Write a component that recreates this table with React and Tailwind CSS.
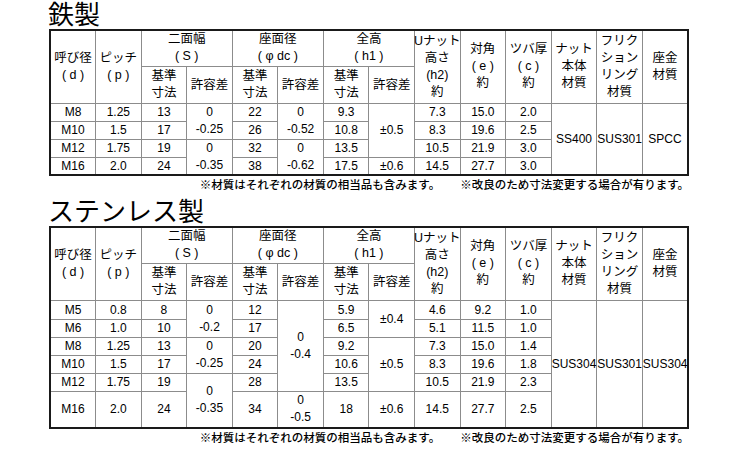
const font = { fontFamily: '"Liberation Sans", "Noto Sans CJK JP", sans-serif' };

const Cell = ({ children, rs, cs, className = '' }) => (
  <td
    rowSpan={rs}
    colSpan={cs}
    className={`border border-[#8c8c8c] p-0 text-center align-middle whitespace-nowrap ${className}`}
  >
    {children}
  </td>
);

const Lines = ({ items }) => (
  <div className="flex flex-col items-center leading-[17px]">
    {items.map((t, i) => (
      <span key={i}>{t}</span>
    ))}
  </div>
);

const Header = () => (
  <thead className="text-[12.5px]">
    <tr className="h-[36px]">
      <Cell rs={2}><Lines items={['呼び径', '( d )']} /></Cell>
      <Cell rs={2}><Lines items={['ピッチ', '( p )']} /></Cell>
      <Cell cs={2}><Lines items={['二面幅', '( S )']} /></Cell>
      <Cell cs={2}><Lines items={['座面径', '( φ dc )']} /></Cell>
      <Cell cs={2}><Lines items={['全高', '( h1 )']} /></Cell>
      <Cell rs={2}><Lines items={['Uナット', '高さ', '(h2)', '約']} /></Cell>
      <Cell rs={2}><Lines items={['対角', '( e )', '約']} /></Cell>
      <Cell rs={2}><Lines items={['ツバ厚', '( c )', '約']} /></Cell>
      <Cell rs={2}><Lines items={['ナット', '本体', '材質']} /></Cell>
      <Cell rs={2}><Lines items={['フリク', 'ション', 'リング', '材質']} /></Cell>
      <Cell rs={2}><Lines items={['座金', '材質']} /></Cell>
    </tr>
    <tr className="h-[37px]">
      <Cell><Lines items={['基準', '寸法']} /></Cell>
      <Cell>許容差</Cell>
      <Cell><Lines items={['基準', '寸法']} /></Cell>
      <Cell>許容差</Cell>
      <Cell><Lines items={['基準', '寸法']} /></Cell>
      <Cell>許容差</Cell>
    </tr>
  </thead>
);

const Table = ({ children }) => (
  <table className="ml-[49px] w-[640px] table-fixed border-collapse border-2 border-[#1a1a1a] text-[12px] leading-[16px] text-black">
    <colgroup>
      {Array.from({ length: 14 }).map((_, i) => (
        <col key={i} />
      ))}
    </colgroup>
    <Header />
    {children}
  </table>
);

const Note = () => (
  <div className="ml-[49px] mt-[1px] flex w-[640px] justify-end gap-[20px] text-[11.5px] font-medium leading-[16px] text-black">
    <span>※材質はそれぞれの材質の相当品も含みます。</span>
    <span>※改良のため寸法変更する場合が有ります。</span>
  </div>
);

const Title = ({ children, className = '' }) => (
  <h2 className={`ml-[48px] text-[26px] leading-[28px] font-normal text-black ${className}`}>{children}</h2>
);

export default function App() {
  const r = 'h-[18px]';
  return (
    <div className="h-[450px] w-[750px] overflow-hidden bg-white" style={font}>
      <Title className="pt-[1px]">鉄製</Title>
      <Table>
        <tbody>
          <tr className={r}>
            <Cell>M8</Cell><Cell>1.25</Cell><Cell>13</Cell>
            <Cell rs={2}><Lines items={['0', '-0.25']} /></Cell>
            <Cell>22</Cell>
            <Cell rs={2}><Lines items={['0', '-0.52']} /></Cell>
            <Cell>9.3</Cell>
            <Cell rs={3}>±0.5</Cell>
            <Cell>7.3</Cell><Cell>15.0</Cell><Cell>2.0</Cell>
            <Cell rs={4}>SS400</Cell>
            <Cell rs={4}>SUS301</Cell>
            <Cell rs={4}>SPCC</Cell>
          </tr>
          <tr className={r}>
            <Cell>M10</Cell><Cell>1.5</Cell><Cell>17</Cell>
            <Cell>26</Cell><Cell>10.8</Cell>
            <Cell>8.3</Cell><Cell>19.6</Cell><Cell>2.5</Cell>
          </tr>
          <tr className={r}>
            <Cell>M12</Cell><Cell>1.75</Cell><Cell>19</Cell>
            <Cell rs={2}><Lines items={['0', '-0.35']} /></Cell>
            <Cell>32</Cell>
            <Cell rs={2}><Lines items={['0', '-0.62']} /></Cell>
            <Cell>13.5</Cell>
            <Cell>10.5</Cell><Cell>21.9</Cell><Cell>3.0</Cell>
          </tr>
          <tr className={r}>
            <Cell>M16</Cell><Cell>2.0</Cell><Cell>24</Cell>
            <Cell>38</Cell><Cell>17.5</Cell><Cell>±0.6</Cell>
            <Cell>14.5</Cell><Cell>27.7</Cell><Cell>3.0</Cell>
          </tr>
        </tbody>
      </Table>
      <Note />

      <Title className="mt-[5px]">ステンレス製</Title>
      <Table>
        <tbody>
          <tr className="h-[19px]">
            <Cell>M5</Cell><Cell>0.8</Cell><Cell>8</Cell>
            <Cell rs={2}><Lines items={['0', '-0.2']} /></Cell>
            <Cell>12</Cell>
            <Cell rs={5}><Lines items={['0', '-0.4']} /></Cell>
            <Cell>5.9</Cell>
            <Cell rs={2}>±0.4</Cell>
            <Cell>4.6</Cell><Cell>9.2</Cell><Cell>1.0</Cell>
            <Cell rs={6}>SUS304</Cell>
            <Cell rs={6}>SUS301</Cell>
            <Cell rs={6}>SUS304</Cell>
          </tr>
          <tr className={r}>
            <Cell>M6</Cell><Cell>1.0</Cell><Cell>10</Cell>
            <Cell>17</Cell><Cell>6.5</Cell>
            <Cell>5.1</Cell><Cell>11.5</Cell><Cell>1.0</Cell>
          </tr>
          <tr className={r}>
            <Cell>M8</Cell><Cell>1.25</Cell><Cell>13</Cell>
            <Cell rs={2}><Lines items={['0', '-0.25']} /></Cell>
            <Cell>20</Cell><Cell>9.2</Cell>
            <Cell rs={3}>±0.5</Cell>
            <Cell>7.3</Cell><Cell>15.0</Cell><Cell>1.4</Cell>
          </tr>
          <tr className={r}>
            <Cell>M10</Cell><Cell>1.5</Cell><Cell>17</Cell>
            <Cell>24</Cell><Cell>10.6</Cell>
            <Cell>8.3</Cell><Cell>19.6</Cell><Cell>1.8</Cell>
          </tr>
          <tr className={r}>
            <Cell>M12</Cell><Cell>1.75</Cell><Cell>19</Cell>
            <Cell rs={2}><Lines items={['0', '-0.35']} /></Cell>
            <Cell>28</Cell><Cell>13.5</Cell>
            <Cell>10.5</Cell><Cell>21.9</Cell><Cell>2.3</Cell>
          </tr>
          <tr className="h-[37px]">
            <Cell>M16</Cell><Cell>2.0</Cell><Cell>24</Cell>
            <Cell>34</Cell>
            <Cell><Lines items={['0', '-0.5']} /></Cell>
            <Cell>18</Cell><Cell>±0.6</Cell>
            <Cell>14.5</Cell><Cell>27.7</Cell><Cell>2.5</Cell>
          </tr>
        </tbody>
      </Table>
      <Note />
    </div>
  );
}
